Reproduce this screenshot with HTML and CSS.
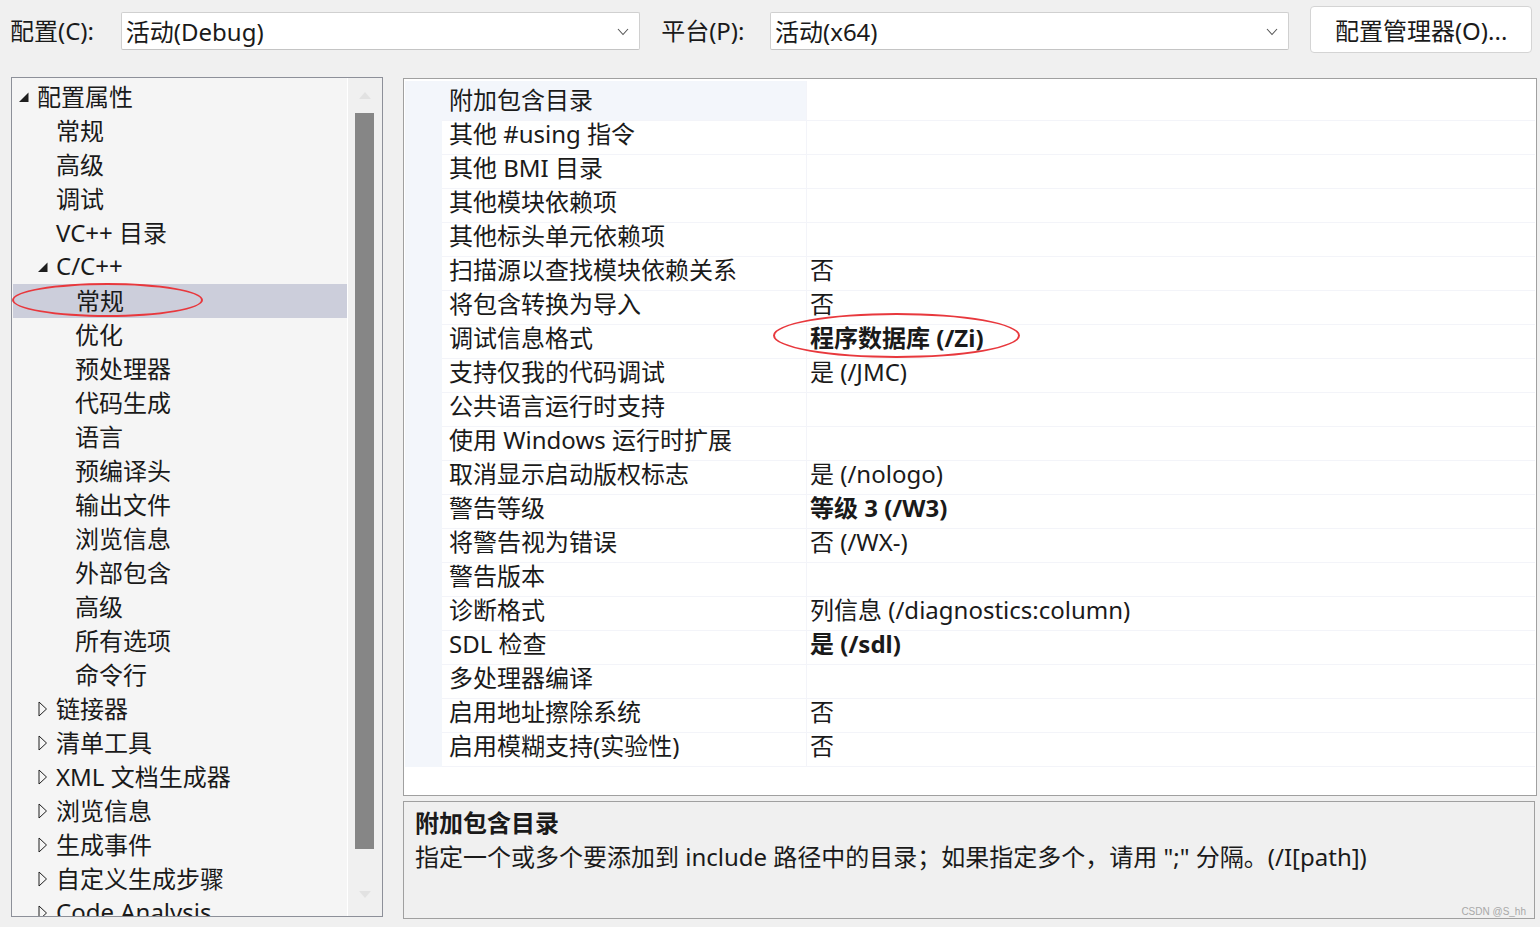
FILE: index.html
```html
<!DOCTYPE html>
<html lang="zh-CN">
<head>
  <meta charset="UTF-8">
  <title>属性页 – C/C++ 常规</title>
  <link rel="stylesheet" href="styles.css">
</head>
<body>
  <div class="toolbar">
    <span class="lbl">配置(C):</span>
    <div class="combo">
      <span>活动(Debug)</span>
      <svg class="chev" width="12" height="8" viewBox="0 0 12 8"><polyline points="1,1 6,6.5 11,1" fill="none" stroke="#555" stroke-width="1.1"/></svg>
    </div>
    <span class="lbl lbl2">平台(P):</span>
    <div class="combo">
      <span>活动(x64)</span>
      <svg class="chev" width="12" height="8" viewBox="0 0 12 8"><polyline points="1,1 6,6.5 11,1" fill="none" stroke="#555" stroke-width="1.1"/></svg>
    </div>
    <button class="mgr">配置管理器(O)...</button>
  </div>

  <div class="main">
    <!-- tree -->
    <div class="tree">
      <div class="tree-list">
        <div class="node l0"><span class="arr"><svg width="10" height="10" viewBox="0 0 10 10"><polygon points="9.5,0.5 9.5,10 0,10" fill="#1e1e1e"/></svg></span>配置属性</div>
        <div class="node l1"><span class="arr"></span>常规</div>
        <div class="node l1"><span class="arr"></span>高级</div>
        <div class="node l1"><span class="arr"></span>调试</div>
        <div class="node l1"><span class="arr"></span>VC++ 目录</div>
        <div class="node l1"><span class="arr"><svg width="10" height="10" viewBox="0 0 10 10"><polygon points="9.5,0.5 9.5,10 0,10" fill="#1e1e1e"/></svg></span>C/C++</div>
        <div class="node l2 sel"><span class="arr"></span>常规</div>
        <div class="node l2"><span class="arr"></span>优化</div>
        <div class="node l2"><span class="arr"></span>预处理器</div>
        <div class="node l2"><span class="arr"></span>代码生成</div>
        <div class="node l2"><span class="arr"></span>语言</div>
        <div class="node l2"><span class="arr"></span>预编译头</div>
        <div class="node l2"><span class="arr"></span>输出文件</div>
        <div class="node l2"><span class="arr"></span>浏览信息</div>
        <div class="node l2"><span class="arr"></span>外部包含</div>
        <div class="node l2"><span class="arr"></span>高级</div>
        <div class="node l2"><span class="arr"></span>所有选项</div>
        <div class="node l2"><span class="arr"></span>命令行</div>
        <div class="node l1"><span class="arr"><svg width="10" height="16" viewBox="0 0 10 16"><polygon points="1,1 8.5,8 1,15" fill="none" stroke="#1e1e1e" stroke-width="1"/></svg></span>链接器</div>
        <div class="node l1"><span class="arr"><svg width="10" height="16" viewBox="0 0 10 16"><polygon points="1,1 8.5,8 1,15" fill="none" stroke="#1e1e1e" stroke-width="1"/></svg></span>清单工具</div>
        <div class="node l1"><span class="arr"><svg width="10" height="16" viewBox="0 0 10 16"><polygon points="1,1 8.5,8 1,15" fill="none" stroke="#1e1e1e" stroke-width="1"/></svg></span>XML 文档生成器</div>
        <div class="node l1"><span class="arr"><svg width="10" height="16" viewBox="0 0 10 16"><polygon points="1,1 8.5,8 1,15" fill="none" stroke="#1e1e1e" stroke-width="1"/></svg></span>浏览信息</div>
        <div class="node l1"><span class="arr"><svg width="10" height="16" viewBox="0 0 10 16"><polygon points="1,1 8.5,8 1,15" fill="none" stroke="#1e1e1e" stroke-width="1"/></svg></span>生成事件</div>
        <div class="node l1"><span class="arr"><svg width="10" height="16" viewBox="0 0 10 16"><polygon points="1,1 8.5,8 1,15" fill="none" stroke="#1e1e1e" stroke-width="1"/></svg></span>自定义生成步骤</div>
        <div class="node l1"><span class="arr"><svg width="10" height="16" viewBox="0 0 10 16"><polygon points="1,1 8.5,8 1,15" fill="none" stroke="#1e1e1e" stroke-width="1"/></svg></span>Code Analysis</div>
      </div>
      <div class="vscroll">
        <svg class="sarrow" width="12" height="7" viewBox="0 0 12 7"><polygon points="0,7 6,0 12,7" fill="#e2e2e2"/></svg>
        <div class="thumb"></div>
        <svg class="sarrow" width="12" height="7" viewBox="0 0 12 7"><polygon points="0,0 6,7 12,0" fill="#e2e2e2"/></svg>
      </div>
      <div class="mark mark-tree"></div>
    </div>

    <div class="right">
      <!-- property grid -->
      <div class="grid">
        <div class="row cur"><div class="gut"></div><div class="name">附加包含目录</div><div class="val"></div></div>
        <div class="row"><div class="gut"></div><div class="name">其他 #using 指令</div><div class="val"></div></div>
        <div class="row"><div class="gut"></div><div class="name">其他 BMI 目录</div><div class="val"></div></div>
        <div class="row"><div class="gut"></div><div class="name">其他模块依赖项</div><div class="val"></div></div>
        <div class="row"><div class="gut"></div><div class="name">其他标头单元依赖项</div><div class="val"></div></div>
        <div class="row"><div class="gut"></div><div class="name">扫描源以查找模块依赖关系</div><div class="val">否</div></div>
        <div class="row"><div class="gut"></div><div class="name">将包含转换为导入</div><div class="val">否</div></div>
        <div class="row"><div class="gut"></div><div class="name">调试信息格式</div><div class="val b">程序数据库 (/Zi)</div></div>
        <div class="row"><div class="gut"></div><div class="name">支持仅我的代码调试</div><div class="val">是 (/JMC)</div></div>
        <div class="row"><div class="gut"></div><div class="name">公共语言运行时支持</div><div class="val"></div></div>
        <div class="row"><div class="gut"></div><div class="name">使用 Windows 运行时扩展</div><div class="val"></div></div>
        <div class="row"><div class="gut"></div><div class="name">取消显示启动版权标志</div><div class="val">是 (/nologo)</div></div>
        <div class="row"><div class="gut"></div><div class="name">警告等级</div><div class="val b">等级 3 (/W3)</div></div>
        <div class="row"><div class="gut"></div><div class="name">将警告视为错误</div><div class="val">否 (/WX-)</div></div>
        <div class="row"><div class="gut"></div><div class="name">警告版本</div><div class="val"></div></div>
        <div class="row"><div class="gut"></div><div class="name">诊断格式</div><div class="val">列信息 (/diagnostics:column)</div></div>
        <div class="row"><div class="gut"></div><div class="name">SDL 检查</div><div class="val b">是 (/sdl)</div></div>
        <div class="row"><div class="gut"></div><div class="name">多处理器编译</div><div class="val"></div></div>
        <div class="row"><div class="gut"></div><div class="name">启用地址擦除系统</div><div class="val">否</div></div>
        <div class="row"><div class="gut"></div><div class="name">启用模糊支持(实验性)</div><div class="val">否</div></div>
        <div class="mark mark-grid"></div>
      </div>

      <div class="desc">
        <div class="desc-title">附加包含目录</div>
        <div class="desc-text">指定一个或多个要添加到 include 路径中的目录；如果指定多个，请用 ";" 分隔。(/I[path])</div>
        <span class="wm">CSDN @S_hh</span>
      </div>
    </div>
  </div>
</body>
</html>
```

FILE: styles.css
```css
* { box-sizing: border-box; }
body { margin: 0; background: #f0f0f0; color: #1a1a1a; font-family: "Noto Sans", "Noto Sans CJK SC", sans-serif; font-size: 24px; width: 1540px; height: 927px; overflow: hidden; }

.toolbar { display: flex; align-items: center; height: 62px; padding: 0 8px 0 10px; }
.lbl { width: 111px; line-height: 1; }
.lbl2 { margin-left: 21px; width: 109px; }
.combo { width: 520px; height: 38px; margin-top: -1px; background: #fff; border: 1px solid #d0d0d0; border-bottom-color: #c4c4c4; border-radius: 2px; display: flex; align-items: center; justify-content: space-between; padding: 0 10px 0 4px; }
.chev { margin-top: 2px; }
.mgr { margin-left: 21px; width: 222px; height: 47px; background: #fff; border: 1px solid #d4d4d4; border-radius: 4px; font: inherit; color: #1a1a1a; padding: 0; margin-top: -3px; }

.main { display: flex; gap: 20px; padding: 15px 3px 0 11px; }

.tree { position: relative; width: 372px; height: 840px; border: 1px solid #8d9099; background: #f5f5f5; display: flex; overflow: hidden; }
.tree-list { flex: 1; padding-top: 2px; overflow: hidden; }
.node { height: 34px; display: flex; align-items: center; white-space: nowrap; padding-bottom: 4px; }
.node .arr { width: 18px; flex: none; display: flex; align-items: center; padding-top: 3px; }
.l0 { padding-left: 7px; }
.l1 { padding-left: 26px; }
.l2 { padding-left: 45px; }
.sel { background: #cccedb; margin-left: 1px; }
.vscroll { width: 35px; flex: none; border-left: 1px solid #fff; background: #f0f0f0; display: flex; flex-direction: column; align-items: center; padding-top: 14px; }
.thumb { width: 19px; height: 736px; background: #868686; margin: 14px 0 0 -1px; }
.sarrow { flex: none; }
.vscroll .sarrow:last-child { margin-top: 42px; }

.right { flex: 1; display: flex; flex-direction: column; gap: 5px; padding-top: 1px; }
.grid { position: relative; height: 718px; background: #fff; border: 1px solid #a0a0a0; padding: 2px 1px 0 1px; }
.row { display: grid; grid-template-columns: 37px 365px 1fr; height: 34px; }
.gut { background: #f3f6fb; }
.name, .val { display: flex; align-items: center; white-space: nowrap; border-bottom: 1px solid #f3f4f9; padding-bottom: 4px; }
.name { padding-left: 7px; border-right: 1px solid #f3f4f9; }
.val { padding-left: 3px; }
.cur .name { background: #f3f6fb; }
.b { font-weight: 700; }

.desc { position: relative; height: 118px; margin-right: 2px; border: 1px solid #a0a0a0; background: #f0f0f0; padding: 4px 11px; }
.desc-title { font-weight: 700; line-height: 34px; }
.desc-text { line-height: 34px; }
.wm { position: absolute; right: 8px; bottom: 1px; font-family: "Liberation Sans", sans-serif; font-size: 10px; color: #a8a8a8; }

.mark { position: absolute; border: 2.5px solid #e8383d; border-radius: 50%; pointer-events: none; }
.mark-tree { left: 0px; top: 205px; width: 191px; height: 34px; }
.mark-grid { left: 369px; top: 234px; width: 247px; height: 45px; }
```
